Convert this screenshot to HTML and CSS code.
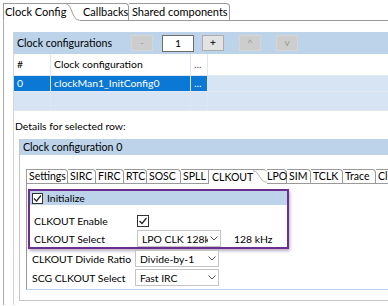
FILE: index.html
```html
<!DOCTYPE html>
<html lang="en">
<head>
    <meta charset="UTF-8">
    <title>Clock Config</title>
    <link rel="stylesheet" href="styles.css">
</head>
<body>
    <div class="editor-tabs">
        <div class="etab active">Clock Config<svg class="curve" width="14" height="18" viewBox="0 0 14 18"><path d="M0 0.5 C6 0.5 6 17.5 14 17.5" fill="none" stroke="#9a9a9a"/></svg></div>
        <div class="etab callbacks">Callbacks</div>
        <div class="etab shared">Shared components</div>
        <div class="etab-fill"></div>
    </div>

    <div class="editor">
        <div class="content">
            <div class="bar">
                <span class="bar-title">Clock configurations</span>
                <div class="btn off minus">-</div>
                <div class="num">1</div>
                <div class="btn plus">+</div>
                <div class="btn off up">^</div>
                <div class="btn off down">v</div>
            </div>
            <div class="grid">
                <div class="grow head">
                    <div class="c1">#</div>
                    <div class="c2">Clock configuration</div>
                    <div class="c3">...</div>
                    <div class="c4"></div>
                </div>
                <div class="grow sel">
                    <div class="c1">0</div>
                    <div class="c2">clockMan1_InitConfig0</div>
                    <div class="c3">...</div>
                    <div class="c4"></div>
                </div>
                <div class="grow empty">
                    <div class="c1"></div>
                    <div class="c2"></div>
                    <div class="c3"></div>
                    <div class="c4"></div>
                </div>
            </div>

            <div class="details-label">Details for selected row:</div>

            <div class="group">
                <div class="group-head">Clock configuration 0</div>
                <div class="group-body">
                    <div class="subtabs">
                        <div class="stab w-settings">Settings</div>
                        <div class="stab w-sirc">SIRC</div>
                        <div class="stab w-firc">FIRC</div>
                        <div class="stab w-rtc">RTC</div>
                        <div class="stab w-sosc">SOSC</div>
                        <div class="stab w-spll">SPLL</div>
                        <div class="stab active w-clkout">CLKOUT<svg class="curve" width="17" height="15" viewBox="0 0 17 15"><path d="M0 0.5 C8 0.5 8 14.5 17 14.5" fill="none" stroke="#9a9a9a"/></svg></div>
                        <div class="stab w-lpo">LPO</div>
                        <div class="stab w-sim">SIM</div>
                        <div class="stab w-tclk">TCLK</div>
                        <div class="stab w-trace">Trace</div>
                        <div class="stab w-cl">Cl</div>
                    </div>
                    <div class="subpanel">
                        <div class="highlight">
                            <div class="init-bar">
                                <span class="check"><svg width="11" height="11" viewBox="0 0 11 11"><path d="M2 5.5 L4.5 8 L9 2.5" fill="none" stroke="#222" stroke-width="1.2"/></svg></span>
                                <span>Initialize</span>
                            </div>
                            <div class="row enable">
                                <span class="label">CLKOUT Enable</span>
                                <span class="check big"><svg width="12" height="12" viewBox="0 0 12 12"><path d="M2.5 6 L5 8.5 L9.5 3" fill="none" stroke="#222" stroke-width="1.2"/></svg></span>
                            </div>
                            <div class="row select-row">
                                <span class="label">CLKOUT Select</span>
                                <div class="dropdown"><span class="dd-text">LPO CLK 128k</span><span class="chev"><svg width="8" height="5" viewBox="0 0 8 5"><path d="M0.5 0.5 L4 4 L7.5 0.5" fill="none" stroke="#555"/></svg></span></div>
                                <span class="freq">128 kHz</span>
                            </div>
                        </div>
                        <div class="row">
                            <span class="label">CLKOUT Divide Ratio</span>
                            <div class="dropdown"><span class="dd-text">Divide-by-1</span><span class="chev"><svg width="8" height="5" viewBox="0 0 8 5"><path d="M0.5 0.5 L4 4 L7.5 0.5" fill="none" stroke="#555"/></svg></span></div>
                        </div>
                        <div class="row">
                            <span class="label">SCG CLKOUT Select</span>
                            <div class="dropdown"><span class="dd-text">Fast IRC</span><span class="chev"><svg width="8" height="5" viewBox="0 0 8 5"><path d="M0.5 0.5 L4 4 L7.5 0.5" fill="none" stroke="#555"/></svg></span></div>
                        </div>
                    </div>
                </div>
            </div>
        </div>
    </div>
</body>
</html>
```

FILE: styles.css
```css
body {
    margin: 0;
    width: 388px;
    height: 306px;
    overflow: hidden;
    background-color: #fff;
    font-family: Lato, "Open Sans", sans-serif;
    font-size: 10.4px;
    color: #000;
}

/* editor tabs */
.editor-tabs {
    display: flex;
    height: 17px;
    padding: 3px 0 0 3px;
    font-size: 11px;
}
.etab {
    display: flex;
    flex-shrink: 0;
    align-items: center;
    height: 16px;
    white-space: nowrap;
    border-top: 1px solid #9a9a9a;
    border-bottom: 1px solid #9a9a9a;
    padding-left: 2px;
    line-height: 16px;
}
.etab.active {
    width: 75px;
    border-left: 1px solid #9a9a9a;
    border-bottom-color: #fff;
    padding-left: 1px;
}
.etab.active .curve {
    margin-left: auto;
    align-self: flex-start;
    margin-top: -1px;
}
.etab.callbacks {
    width: 45px;
    padding-left: 3px;
    border-right: 1px solid #9a9a9a;
    border-top-right-radius: 4px;
}
.etab.shared {
    width: 97px;
    padding-left: 3px;
    border-right: 1px solid #9a9a9a;
    border-top-right-radius: 4px;
}
.etab-fill {
    flex: 1;
    border-bottom: 1px solid #9a9a9a;
    height: 16px;
    margin-top: 1px;
}

/* main editor area */
.editor {
    margin-left: 3px;
    border-left: 1px solid #a8a8a8;
    height: 285px;
    padding-top: 12px;
    box-sizing: border-box;
}
.content {
    margin-left: 9px;
    border-left: 1px solid #d4d4d4;
    height: 273px;
}
.bar {
    display: flex;
    align-items: center;
    height: 22px;
    background-color: #bcd3ea;
    padding-left: 3px;
}
.bar-title {
    width: 114px;
    font-size: 10.6px;
}
.btn {
    width: 20px;
    height: 14px;
    border: 1px solid #adadad;
    background-color: #e3e3e3;
    text-align: center;
    line-height: 13px;
    font-size: 10px;
}
.btn.off {
    background-color: #cdcdcd;
    border-color: #d6d6d6;
    color: #9a9a9a;
}
.btn.plus {
    margin-left: 8px;
    font-weight: bold;
    color: #222;
}
.btn.up, .btn.down {
    margin-left: 15px;
}
.num {
    width: 30px;
    height: 15px;
    margin-left: 9px;
    background-color: #fff;
    border: 1px solid #6e6e6e;
    text-align: center;
    line-height: 15px;
}

/* grid */
.grow {
    display: flex;
    border-bottom: 1px solid #e2e8f0;
}
.grow > div {
    border-right: 1px solid #e0e6ee;
    padding-left: 3px;
    white-space: nowrap;
}
.c1 { width: 33px; }
.c2 { width: 136px; }
.c3 { width: 13px; color: #555; }
.c4 { flex: 1; border-right: none !important; }
.grow.head {
    height: 21px;
    line-height: 21px;
}
.grow.sel {
    height: 15px;
    line-height: 15px;
    background-color: #d6e4f3;
}
.grow.sel .c1, .grow.sel .c2, .grow.sel .c3 {
    background-color: #0a78d4;
    color: #fff;
}
.grow.empty {
    height: 18px;
    background-color: #d6e4f3;
}

.details-label {
    padding: 9px 0 0 1px;
    height: 19px;
    line-height: 12px;
}

/* clock configuration group */
.group {
    margin-left: 5px;
    border-left: 1px solid #c6c6c6;
    border-bottom: 1px solid #c6c6c6;
    height: 161px;
}
.group-head {
    height: 16px;
    line-height: 16px;
    padding-left: 3px;
    background-color: #bcd3ea;
    font-size: 10.6px;
}
.group-body {
    padding: 14px 0 0 6px;
}
.subtabs {
    display: flex;
    height: 14px;
    border-bottom: 1px solid #9a9a9a;
}
.stab {
    display: flex;
    flex-shrink: 0;
    align-items: center;
    height: 13px;
    padding-left: 2px;
    border-top: 1px solid #9a9a9a;
    border-right: 1px solid #9a9a9a;
    border-top-right-radius: 4px;
    white-space: nowrap;
    line-height: 13px;
    font-size: 10.5px;
}
.stab.active {
    border-right: none;
    border-left: 1px solid #9a9a9a;
    height: 14px;
    margin-bottom: -1px;
    background-color: #fff;
    padding-left: 3px;
}
.stab.active .curve {
    margin-left: auto;
    align-self: flex-start;
    margin-top: -1px;
}
.w-settings { width: 38px; border-left: 1px solid #9a9a9a; }
.w-sirc { width: 25px; }
.w-firc { width: 25px; }
.w-rtc { width: 20px; }
.w-sosc { width: 31px; }
.w-spll { width: 25px; border-right: none; border-top-right-radius: 0; }
.w-clkout { width: 55px; }
.w-lpo { width: 19px; padding-left: 0; }
.w-sim { width: 21px; }
.w-tclk { width: 29px; }
.w-trace { width: 30px; }
.w-cl { width: 20px; border-right: none; }

.subpanel {
    border-left: 1px solid #9a9a9a;
    border-bottom: 1px solid #b9d3ee;
    padding: 5px 0 2px 1px;
}
.highlight {
    width: 257px;
    border: 2px solid #6b2f90;
    box-shadow: 1px 2px 3px rgba(60, 20, 90, 0.35);
}
.init-bar {
    display: flex;
    align-items: center;
    height: 14px;
    background-color: #bcd3ea;
    padding-left: 2px;
}
.check {
    display: inline-block;
    width: 9px;
    height: 9px;
    border: 1px solid #333;
    background-color: #fff;
    margin-right: 4px;
}
.check svg {
    display: block;
    margin: -1px 0 0 -1px;
}
.row {
    display: flex;
    align-items: center;
    height: 19px;
    padding-left: 4px;
    white-space: nowrap;
}
.row.enable {
    margin-top: 6px;
}
.row.select-row {
    height: 17px;
}
.label {
    width: 103px;
    flex-shrink: 0;
}
.check.big {
    width: 10px;
    height: 10px;
}
.dropdown {
    display: flex;
    align-items: center;
    width: 78px;
    height: 15px;
    border: 1px solid #c4c4c4;
    background-color: #fff;
    padding-left: 4px;
    overflow: hidden;
}
.dd-text {
    flex: 1;
    overflow: hidden;
    white-space: nowrap;
}
.chev {
    width: 12px;
    display: flex;
    justify-content: center;
}
.freq {
    margin-left: 13px;
}
```
